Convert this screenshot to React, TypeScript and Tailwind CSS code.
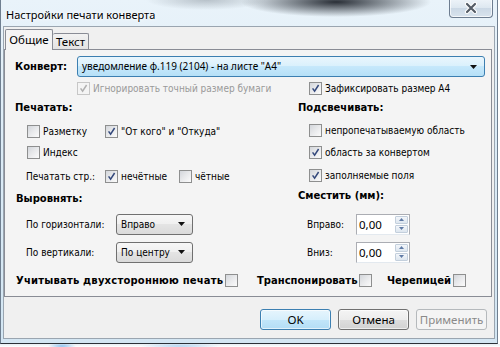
import React from "react";

const UI = "font-['Noto_Sans',sans-serif]";
const TXT = "font-['DejaVu_Sans_Condensed','DejaVu_Sans',sans-serif] [font-stretch:condensed] font-normal";

function Check({ checked = false, disabled = false }: { checked?: boolean; disabled?: boolean }) {
  return (
    <span
      className={
        disabled
          ? "flex h-[13px] w-[13px] shrink-0 items-center justify-center border border-[#c7c7c7] bg-[#f4f4f4]"
          : "flex h-[13px] w-[13px] shrink-0 items-center justify-center border border-[#8e8f8f] bg-[linear-gradient(135deg,#d3d6db_0%,#e9eaec_50%,#fbfbfb_100%)]"
      }
    >
      {checked && (
        <svg width="11" height="11" viewBox="0 0 11 11">
          <path
            d="M2.6 5.4 L4.6 8.2 L8.6 2"
            fill="none"
            stroke={disabled ? "#b0b0b0" : "#34497c"}
            strokeWidth="1.5"
          />
        </svg>
      )}
    </span>
  );
}

function CheckLabel({
  checked,
  children,
  className = "",
}: {
  checked?: boolean;
  children: React.ReactNode;
  className?: string;
}) {
  return (
    <div className={`flex items-center gap-[3px] ${className}`}>
      <Check checked={checked} />
      <span className={TXT}>{children}</span>
    </div>
  );
}

function Arrow() {
  return (
    <svg width="7" height="4" viewBox="0 0 7 4">
      <path d="M0 0H7L3.5 4Z" fill="#111" />
    </svg>
  );
}

function Drop({ value }: { value: string }) {
  return (
    <div className="flex h-[21px] w-[77px] items-center justify-between rounded-[3px] border border-[#707070] bg-[linear-gradient(180deg,#f7f7f7_0%,#efefef_50%,#e4e4e4_50%,#dadada_100%)] pl-[4px] pr-[7px]">
      <span className={TXT}>{value}</span>
      <Arrow />
    </div>
  );
}

function Spin() {
  return (
    <div className="flex h-[21px] w-[54px] items-stretch border border-[#abadb3] border-b-[#e3e9ef] bg-white">
      <span className={`flex-1 pl-[2px] text-[11.5px] leading-[19px] text-black ${UI}`}>0,00</span>
      <div className="flex w-[14px] flex-col gap-[1px] py-[1px] pr-[1px]">
        <span className="flex flex-1 items-center justify-center rounded-[1px] border border-[#c3cfdc] bg-[linear-gradient(180deg,#f3f6fa,#dde6ef)]">
          <svg width="5" height="3" viewBox="0 0 5 3">
            <path d="M0 3H5L2.5 0Z" fill="#5f7aa5" />
          </svg>
        </span>
        <span className="flex flex-1 items-center justify-center rounded-[1px] border border-[#c3cfdc] bg-[linear-gradient(180deg,#f3f6fa,#dde6ef)]">
          <svg width="5" height="3" viewBox="0 0 5 3">
            <path d="M0 0H5L2.5 3Z" fill="#5f7aa5" />
          </svg>
        </span>
      </div>
    </div>
  );
}

export default function App() {
  return (
    <div className="flex h-[347px] w-[500px] flex-col overflow-hidden bg-white font-['DejaVu_Sans',sans-serif] text-[10px] text-black">
      <div className="flex h-[344px] w-[498px] shrink-0 flex-col border-x border-b border-x-[#6f7f90] border-b-[#2b3138] bg-[radial-gradient(ellipse_95px_15px_at_335px_2px,rgba(25,30,38,0.92),rgba(25,30,38,0)),radial-gradient(ellipse_60px_10px_at_205px_0px,rgba(90,100,110,0.35),rgba(90,100,110,0)),linear-gradient(180deg,#e9f3fa_0%,#dcebf6_40%,#d3e6f3_100%)]">
        {/* title bar */}
        <div className="flex h-[26px] shrink-0 items-start">
          <span
            className={`ml-[5px] mt-[7px] text-[11px] leading-[16px] text-black [text-shadow:0_0_6px_#fff,0_0_3px_#fff] ${UI}`}
          >
            Настройки печати конверта
          </span>
          <div className="ml-auto mr-[4px] -mt-px flex h-[19px] w-[44px] items-center justify-center rounded-b-[4px] border border-t-0 border-[#6d7d90] bg-[linear-gradient(180deg,#eef4f9_0%,#dde7f0_50%,#cbd8e5_50%,#d8e3ed_100%)] shadow-[inset_0_0_0_1px_rgba(255,255,255,0.7)]">
            <svg width="14" height="12" viewBox="0 0 14 12">
              <path d="M3 2L11 10M11 2L3 10" stroke="#fff" strokeWidth="4.2" strokeLinecap="round" />
              <path d="M3 2L11 10M11 2L3 10" stroke="#545c66" strokeWidth="2.2" strokeLinecap="round" />
            </svg>
          </div>
        </div>

        {/* client area */}
        <div className="ml-[2px] flex h-[313px] w-[492px] flex-col border border-[#9aa5b0] bg-[#f0f0f0]">
          {/* tabs */}
          <div className={`flex h-[22px] items-end pl-[1px] text-[11.5px] ${UI}`}>
            <div className="relative z-10 -mb-px flex h-[21px] w-[48px] items-center justify-center rounded-t-[2px] border border-b-0 border-[#898c95] bg-[#f4f4f4] pb-[1px]">
              Общие
            </div>
            <div className="flex h-[16px] w-[36px] items-center justify-center rounded-t-[2px] border border-b-0 border-l-0 border-[#898c95] bg-[linear-gradient(180deg,#f2f2f2,#e3e3e3)] leading-none">
              Текст
            </div>
          </div>

          {/* tab page */}
          <div className="flex h-[248px] w-[488px] flex-col border border-[#898c95] bg-[#f4f4f4] pl-[10px]">
            <div className="mt-[6px] flex h-[21px] items-center">
              <span className="w-[62px] font-bold">Конверт:</span>
              <div className="flex h-[21px] w-[408px] items-center justify-between rounded-[3px] border border-[#3c7fb1] bg-[linear-gradient(180deg,#eaf6fd_0%,#d9f0fc_50%,#c6e8fb_50%,#b6e0f7_100%)] pl-[4px] pr-[7px]">
                <span className={`text-[10px] ${UI}`}>уведомление ф.119 (2104) - на листе "A4"</span>
                <Arrow />
              </div>
            </div>

            <div className="mt-[4px] grid h-[13px] grid-cols-[283px_1fr] items-center">
              <div className="ml-[62px] flex items-center gap-[3px] text-[#999999]">
                <Check checked disabled />
                <span className={TXT}>Игнорировать точный размер бумаги</span>
              </div>
              <CheckLabel checked className="ml-[11px]">
                Зафиксировать размер A4
              </CheckLabel>
            </div>

            <div className="grid grid-cols-[283px_1fr]">
              <div className="flex flex-col">
                <div className="flex h-[26px] items-center font-bold">Печатать:</div>
                <div className="ml-[12px] flex h-[22px] items-center">
                  <CheckLabel className="w-[78px]">Разметку</CheckLabel>
                  <CheckLabel checked>"От кого" и "Откуда"</CheckLabel>
                </div>
                <div className="ml-[12px] flex h-[21px] items-center">
                  <CheckLabel>Индекс</CheckLabel>
                </div>
                <div className="ml-[11px] flex h-[26px] items-center">
                  <span className={`w-[79px] ${TXT}`}>Печатать стр.:</span>
                  <CheckLabel checked className="w-[74px]">
                    нечётные
                  </CheckLabel>
                  <CheckLabel>чётные</CheckLabel>
                </div>
                <div className="ml-[1px] flex h-[18px] items-center font-bold">Выровнять:</div>
                <div className="ml-[11px] flex h-[34px] items-center">
                  <span className={`w-[90px] ${TXT}`}>По горизонтали:</span>
                  <Drop value="Вправо" />
                </div>
                <div className="ml-[11px] flex h-[22px] items-center">
                  <span className={`w-[90px] ${TXT}`}>По вертикали:</span>
                  <Drop value="По центру" />
                </div>
              </div>

              <div className="flex flex-col">
                <div className="flex h-[26px] items-center font-bold">Подсвечивать:</div>
                <div className="ml-[11px] flex h-[20px] items-center">
                  <CheckLabel>непропечатываемую область</CheckLabel>
                </div>
                <div className="ml-[11px] flex h-[24px] items-center">
                  <CheckLabel checked>область за конвертом</CheckLabel>
                </div>
                <div className="ml-[11px] flex h-[22px] items-center">
                  <CheckLabel checked>заполняемые поля</CheckLabel>
                </div>
                <div className="flex h-[18px] items-center font-bold">Сместить (мм):</div>
                <div className="ml-[9px] flex h-[40px] items-center">
                  <span className={`w-[49px] ${TXT}`}>Вправо:</span>
                  <Spin />
                </div>
                <div className="ml-[9px] flex h-[16px] items-center">
                  <span className={`w-[49px] ${TXT}`}>Вниз:</span>
                  <Spin />
                </div>
              </div>
            </div>

            <div className="flex h-[32px] items-center pt-[2px] font-bold">
              <div className="ml-[1px] flex w-[241px] items-center gap-[2px]">
                <span className="tracking-[0.2px]">Учитывать двухстороннюю печать</span>
                <Check />
              </div>
              <div className="flex w-[130px] items-center gap-[2px]">
                <span>Транспонировать</span>
                <Check />
              </div>
              <div className="flex items-center gap-[2px]">
                <span>Черепицей</span>
                <Check />
              </div>
            </div>
          </div>

          {/* buttons */}
          <div className={`mt-[12px] flex justify-end gap-[7px] pr-[7px] text-[11.5px] ${UI}`}>
            <div className="flex h-[21px] w-[71px] items-center justify-center rounded-[3px] border border-[#3c7fb1] bg-[linear-gradient(180deg,#e6f5fd_0%,#d6effc_50%,#c2e6fa_50%,#b3ddf5_100%)] shadow-[inset_0_0_0_1px_rgba(255,255,255,0.6)]">
              OK
            </div>
            <div className="flex h-[21px] w-[71px] items-center justify-center rounded-[3px] border border-[#707070] bg-[linear-gradient(180deg,#f4f4f4_0%,#ececec_50%,#dedede_50%,#d2d2d2_100%)] shadow-[inset_0_0_0_1px_rgba(255,255,255,0.6)]">
              Отмена
            </div>
            <div className="flex h-[21px] w-[71px] items-center justify-center rounded-[3px] border border-[#b5b9bc] bg-[#f4f4f4] text-[#8a8a8a]">
              Применить
            </div>
          </div>
        </div>
      </div>
      <div className="h-[3px] w-[500px] bg-[radial-gradient(ellipse_14px_3px_at_62px_2px,#8fc3f0,rgba(143,195,240,0)),radial-gradient(ellipse_40px_3px_at_180px_2px,#b5d6f2,rgba(181,214,242,0)),linear-gradient(180deg,#e8eef4,#ffffff)]" />
    </div>
  );
}
